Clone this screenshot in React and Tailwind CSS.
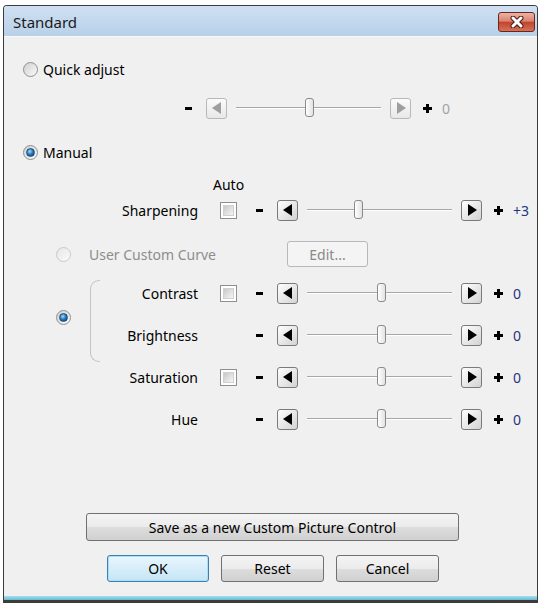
import React from "react";

const Radio = ({ checked, disabled }) => (
  <span
    className={`flex h-[15px] w-[15px] shrink-0 items-center justify-center rounded-full border ${
      disabled
        ? "border-[#c9c9c9] bg-linear-to-br from-[#e6e6e6] to-[#fbfbfb]"
        : "border-[#8e8f8f] bg-linear-to-br from-[#cfcfcf] to-[#fbfbfb]"
    }`}
  >
    {checked && (
      <span className="h-[9px] w-[9px] rounded-full border border-[#1b4f7e] bg-[radial-gradient(circle_at_40%_35%,#a9dcf8,#2b7cc0_45%,#103f6b_90%)]" />
    )}
  </span>
);

const Checkbox = () => (
  <span className="flex h-[17px] w-[17px] shrink-0 items-center justify-center border border-[#8e8f8f] bg-white">
    <span className="h-[11px] w-[11px] border border-[#d0d0d0] bg-linear-to-br from-[#c9c9c9] to-[#f5f5f5]" />
  </span>
);

const ArrowBtn = ({ dir, disabled }) => (
  <span
    className={`flex h-[21px] w-[21px] shrink-0 items-center justify-center rounded-[3px] border ${
      disabled
        ? "border-[#b8b8b8] bg-linear-to-b from-[#fbfbfb] to-[#e8e8e8]"
        : "border-[#7a7a7a] bg-linear-to-br from-[#ffffff] to-[#d3d3d3]"
    }`}
  >
    <svg width="10" height="12" viewBox="0 0 10 12">
      {dir === "left" ? (
        <polygon points="9,0 9,12 0,6" fill={disabled ? "#9e9e9e" : "#000"} />
      ) : (
        <polygon points="1,0 1,12 10,6" fill={disabled ? "#9e9e9e" : "#000"} />
      )}
    </svg>
  </span>
);

const Slider = ({ value, pos, disabled }) => (
  <div className="flex h-[22px] items-center">
    <span className="h-[3px] w-[7px] bg-black" />
    <span className="ml-[14px]">
      <ArrowBtn dir="left" disabled={disabled} />
    </span>
    <div className="relative ml-[9px] flex h-[21px] w-[145px] items-center">
      <div className="h-[2px] w-full border-t border-[#a7a7a7] bg-white" />
      <span
        className="absolute top-0 h-[19px] w-[9px] rounded-[3px] border border-[#8a8a8a] bg-linear-to-r from-[#ffffff] to-[#e2e2e2]"
        style={{ left: pos }}
      />
    </div>
    <span className="ml-[9px]">
      <ArrowBtn dir="right" disabled={disabled} />
    </span>
    <span className="relative ml-[12px] h-[9px] w-[9px]">
      <span className="absolute left-0 top-[3px] h-[3px] w-[9px] bg-black" />
      <span className="absolute left-[3px] top-0 h-[9px] w-[3px] bg-black" />
    </span>
    <span className={`ml-[10px] ${disabled ? "text-[#a3a3a3]" : "text-[#22357f]"}`}>{value}</span>
  </div>
);

const AdjustRow = ({ label, checkbox, value, pos }) => (
  <div className="flex h-[22px] items-center">
    <span className="w-[98px] text-right">{label}</span>
    <span className="ml-[22px] w-[17px]">{checkbox && <Checkbox />}</span>
    <span className="ml-[19px]">
      <Slider value={value} pos={pos} />
    </span>
  </div>
);

const Button = ({ children, primary, disabled, className }) => (
  <div
    className={`flex items-center justify-center rounded-[3px] border ${
      primary
        ? "border-[#3c7fb1] bg-linear-to-b from-[#eaf6fd] to-[#c4e5f6] shadow-[inset_0_0_0_1px_#a9e0f8]"
        : disabled
        ? "border-[#b5b9bc] bg-[#f4f4f4] text-[#8a8a8a]"
        : "border-[#707070] bg-[linear-gradient(#f4f4f4,#ebebeb_50%,#dddddd_51%,#d0d0d0)]"
    } ${className}`}
  >
    {children}
  </div>
);

export default function App() {
  return (
    <div className="h-[606px] w-[539px] overflow-hidden bg-white pt-[5px] font-['Noto_Sans',sans-serif] text-[14px] text-black">
      <div className="ml-[3px] flex h-[598px] w-[535px] flex-col rounded-t-[4px] border border-b-[3px] border-[#3c3c3c] bg-[#f0f0f0]">
        <div className="flex h-[30px] shrink-0 items-center justify-between rounded-t-[3px] bg-linear-to-b from-[#cfe0f2] to-[#b8d0e9] pl-[9px] pr-[2px] pt-[2px]">
          <span className="text-[15px] text-[#1a1a1a]">Standard</span>
          <div className="flex h-[20px] w-[37px] items-center justify-center rounded-[3px] border border-[#6e2419] bg-[linear-gradient(#ebb3a5,#d9836f_45%,#c2442c_52%,#d4725a)]">
            <svg width="16" height="12" viewBox="0 0 16 12">
              <path d="M4 2 L12 10 M12 2 L4 10" stroke="#4b1a12" strokeWidth="5" strokeLinecap="round" />
              <path d="M4 2 L12 10 M12 2 L4 10" stroke="#fff" strokeWidth="3" strokeLinecap="round" />
            </svg>
          </div>
        </div>

        <div className="flex flex-1 flex-col border-t border-[#f9f9f9]">
          <div className="mt-[23px] flex h-[18px] items-center pl-[19px]">
            <Radio />
            <span className="ml-[5px]">Quick adjust</span>
          </div>

          <div className="mt-[19px] pl-[181px]">
            <Slider value="0" pos={69} disabled />
          </div>

          <div className="mt-[24px] flex h-[18px] items-center pl-[19px]">
            <Radio checked />
            <span className="ml-[5px]">Manual</span>
          </div>

          <div className="mt-[15px] flex h-[16px] items-center pl-[209px]">Auto</div>

          <div className="mt-[7px] pl-[96px]">
            <AdjustRow label="Sharpening" checkbox value="+3" pos={47} />
          </div>

          <div className="mt-[20px] flex h-[26px] items-center pl-[52px]">
            <Radio disabled />
            <span className="ml-[18px] w-[198px] text-[#8d8d8d]">User Custom Curve</span>
            <Button disabled className="h-[26px] w-[81px]">
              Edit...
            </Button>
          </div>

          <div className="mt-[15px] flex h-[64px] items-start pl-[52px]">
            <span className="mt-[28px]">
              <Radio checked />
            </span>
            <span className="ml-[19px] mt-[-2px] h-[82px] w-[10px] shrink-0 rounded-l-[9px] border-y border-l border-[#c3c3c3]" />
            <div className="flex flex-col gap-[20px]">
              <AdjustRow label="Contrast" checkbox value="0" pos={70} />
              <AdjustRow label="Brightness" value="0" pos={70} />
            </div>
          </div>

          <div className="mt-[20px] pl-[96px]">
            <AdjustRow label="Saturation" checkbox value="0" pos={70} />
          </div>

          <div className="mt-[20px] pl-[96px]">
            <AdjustRow label="Hue" value="0" pos={70} />
          </div>

          <Button className="ml-[82px] mt-[83px] h-[28px] w-[373px]">Save as a new Custom Picture Control</Button>

          <div className="ml-[103px] mt-[14px] flex gap-[12px]">
            <Button primary className="h-[27px] w-[102px]">
              OK
            </Button>
            <Button className="h-[27px] w-[103px]">Reset</Button>
            <Button className="h-[27px] w-[103px]">Cancel</Button>
          </div>

          <div className="flex-1" />
          <div className="h-[4px] bg-linear-to-b from-[#a9dde9] to-[#62bcd3]" />
        </div>
      </div>
    </div>
  );
}
